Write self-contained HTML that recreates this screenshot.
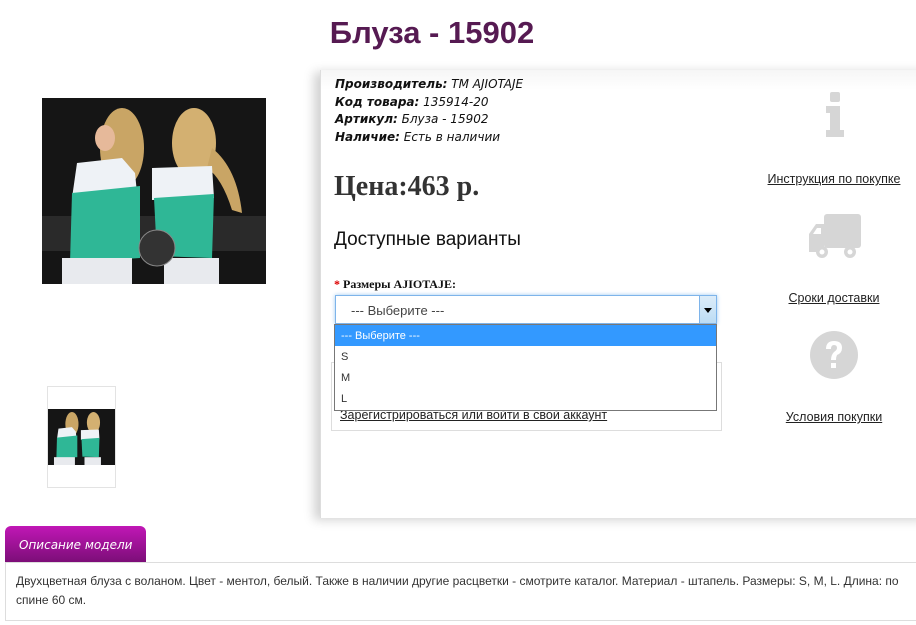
<!DOCTYPE html>
<html><head><meta charset="utf-8">
<style>
*{margin:0;padding:0;box-sizing:border-box}
body{width:916px;height:625px;background:#fff;position:relative;overflow:hidden;font-family:"Liberation Sans","DejaVu Sans",sans-serif;color:#222}
.a{position:absolute}
h1{position:absolute;left:0;width:864px;top:15px;text-align:center;font:bold 31px "Liberation Sans","DejaVu Sans",sans-serif;color:#561a52}
.panel{left:320px;top:70px;width:610px;height:448px;box-shadow:-6px 2px 10px rgba(0,0,0,.18);border-left:1px solid #ddd;background:linear-gradient(to bottom,#f6f6f6 0,#fff 20px)}
.meta{left:335px;top:76px;font:italic 12px/17.5px "DejaVu Sans","Liberation Sans",sans-serif;color:#111}
.meta b{font-weight:bold}
.price{left:334px;top:171px;font:bold 28px "Liberation Serif","DejaVu Serif",serif;color:#333}
.var{left:334px;top:229px;font:19px "Liberation Sans",sans-serif;color:#111}
.lab{left:334px;top:277px;font:bold 12px "Liberation Serif",serif;color:#111}
.lab span{color:#d00}
.sel{left:335px;top:295px;width:382px;height:29px;border:1px solid #7eb4ea;box-shadow:0 0 4px #9cc8f0;background:#fff;font:13px "Liberation Sans",sans-serif;color:#444;padding:7px 15px}
.btn{position:absolute;right:0;top:0;width:17px;height:27px;background:linear-gradient(#dcecf9,#bcdcf4);border-left:1px solid #7eb4ea}
.btn:after{content:"";position:absolute;left:4px;top:12px;border:4px solid transparent;border-top:5px solid #000;border-bottom:0}
.box{left:331px;top:362px;width:391px;height:69px;border:1px solid #ddd}
.reg{left:340px;top:408px;font:12.5px "Liberation Sans",sans-serif;color:#222;text-decoration:underline}
.dd{left:334px;top:324px;width:383px;height:87px;border:1px solid #777;background:#fff;font:11px "Liberation Sans",sans-serif;color:#333}
.dd div{height:21px;padding:5px 6px}
.dd .h{background:#3399ff;color:#fff}
.lnk{font:12.5px "Liberation Sans",sans-serif;color:#222;text-decoration:underline;text-align:center;width:176px;left:746px}
.tab{left:5px;top:526px;width:141px;height:36px;border-radius:6px 6px 0 0;background:linear-gradient(#c117b6,#7c0e78);color:#fff;font:italic 12px "DejaVu Sans",sans-serif;padding:12px 0 0 14px}
.desc{left:5px;top:562px;width:920px;height:59px;border:1px solid #ddd;font:12px/19px "Liberation Sans",sans-serif;color:#333;padding:9px 10px}
</style></head><body>
<h1>Блуза - 15902</h1>

<svg class="a" style="left:42px;top:98px" width="224" height="186" viewBox="0 0 224 186">
<rect width="224" height="186" fill="#151515"/>
<rect y="118" width="224" height="35" fill="#2a2a2a"/>
<ellipse cx="80" cy="50" rx="22" ry="40" fill="#c9a565"/>
<ellipse cx="152" cy="45" rx="22" ry="35" fill="#d3b071"/>
<path d="M170 50 Q195 70 200 115 L190 112 Q180 80 165 70Z" fill="#c9a565"/>
<ellipse cx="63" cy="40" rx="10" ry="13" fill="#e6b99a"/>
<path d="M35 65 L80 60 L93 75 L95 95 L30 100Z" fill="#eef2f6"/>
<path d="M30 95 L98 88 L98 160 L28 165Z" fill="#2fb796"/>
<path d="M110 70 L170 68 L172 100 L110 102Z" fill="#eef2f6"/>
<path d="M112 100 L172 96 L170 160 L115 158Z" fill="#2fb796"/>
<rect x="20" y="160" width="70" height="26" fill="#e8eaee"/>
<rect x="122" y="160" width="55" height="26" fill="#e8eaee"/>
<circle cx="115" cy="150" r="18" fill="#333" stroke="#888"/>
</svg>

<div class="a" style="left:47px;top:386px;width:69px;height:102px;border:1px solid #e3e3e3"></div>
<svg class="a" style="left:48px;top:409px" width="67" height="56" viewBox="0 0 224 186" preserveAspectRatio="none">
<rect width="224" height="186" fill="#151515"/>
<ellipse cx="80" cy="50" rx="22" ry="40" fill="#c9a565"/>
<ellipse cx="152" cy="45" rx="22" ry="35" fill="#d3b071"/>
<path d="M35 65 L80 60 L93 75 L95 95 L30 100Z" fill="#eef2f6"/>
<path d="M30 95 L98 88 L98 160 L28 165Z" fill="#2fb796"/>
<path d="M110 70 L170 68 L172 100 L110 102Z" fill="#eef2f6"/>
<path d="M112 100 L172 96 L170 160 L115 158Z" fill="#2fb796"/>
<rect x="20" y="160" width="70" height="26" fill="#e8eaee"/>
<rect x="122" y="160" width="55" height="26" fill="#e8eaee"/>
</svg>

<div class="a panel"></div>
<div class="a meta"><b>Производитель:</b> TM AJIOTAJE<br><b>Код товара:</b> 135914-20<br><b>Артикул:</b> Блуза - 15902<br><b>Наличие:</b> Есть в наличии</div>
<div class="a price">Цена:463 р.</div>
<div class="a var">Доступные варианты</div>
<div class="a lab"><span>*</span> Размеры AJIOTAJE:</div>
<div class="a box"></div>
<div class="a reg">Зарегистрироваться или войти в свой аккаунт</div>
<div class="a sel">--- Выберите ---<div class="btn"></div></div>
<div class="a dd"><div class="h">--- Выберите ---</div><div>S</div><div>M</div><div>L</div></div>

<svg class="a" style="left:824px;top:92px" width="22" height="46" viewBox="0 0 22 46"><rect x="6" y="0" width="10" height="10" rx="2" fill="#d6d6d6"/><path d="M2 14 H16 V38 H20 V45 H2 V38 H6 V21 H2Z" fill="#d6d6d6"/></svg>
<div class="a lnk" style="top:172px">Инструкция по покупке</div>
<svg class="a" style="left:808px;top:214px" width="54" height="46" viewBox="0 0 54 46"><rect x="16" y="0" width="37" height="34" rx="3" fill="#d6d6d6"/><path d="M1 20 L8 10 H16 V38 H1Z" fill="#d6d6d6"/><path d="M5 20 L9 14 H13 V20Z" fill="#fff"/><circle cx="14" cy="38" r="6" fill="#d6d6d6"/><circle cx="14" cy="38" r="2.5" fill="#fff"/><circle cx="42" cy="38" r="6" fill="#d6d6d6"/><circle cx="42" cy="38" r="2.5" fill="#fff"/></svg>
<div class="a lnk" style="top:291px">Сроки доставки</div>
<svg class="a" style="left:810px;top:331px" width="48" height="48" viewBox="0 0 48 48"><circle cx="24" cy="24" r="24" fill="#d6d6d6"/><path d="M16 18 Q16 10 24 10 Q32 10 32 17 Q32 22 27 24 Q26 26 26 29 H21 Q21 24 24 21 Q27 19 27 17 Q27 14 24 14 Q21 14 21 18Z" fill="#fff"/><rect x="21" y="32" width="5" height="5" fill="#fff"/></svg>
<div class="a lnk" style="top:410px">Условия покупки</div>

<div class="a tab">Описание модели</div>
<div class="a desc">Двухцветная блуза с воланом. Цвет - ментол, белый. Также в наличии другие расцветки - смотрите каталог. Материал - штапель. Размеры: S, M, L. Длина: по<br>спине 60 см.</div>
</body></html>
